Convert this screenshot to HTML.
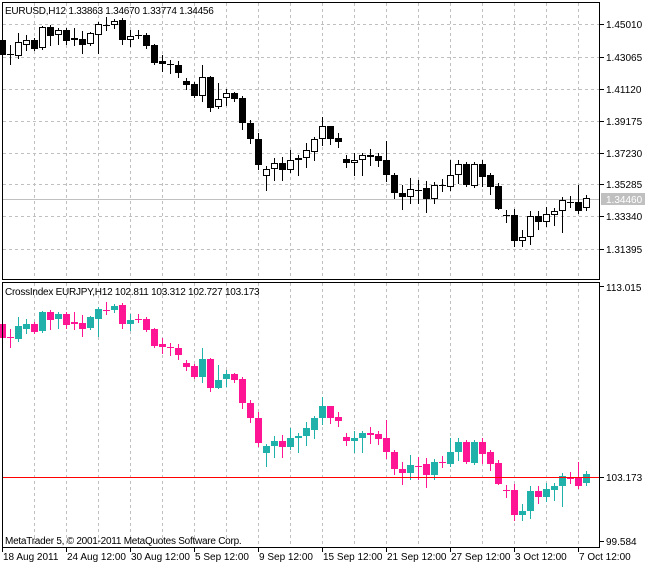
<!DOCTYPE html>
<html><head><meta charset="utf-8"><style>
html,body{margin:0;padding:0;background:#fff;width:653px;height:569px;overflow:hidden}
svg{display:block}
text{font-family:"Liberation Sans",sans-serif;font-size:10px;fill:#000}
.h{letter-spacing:-0.25px}
</style></head><body>
<svg id="s" width="653" height="569" xmlns="http://www.w3.org/2000/svg">
<rect x="0" y="0" width="653" height="569" fill="#fff"/>
<g id="grid"></g>
<line x1="2" y1="199.5" x2="600" y2="199.5" stroke="#c0c0c0"/>
<g id="c"></g>
<line x1="2" y1="477.5" x2="600" y2="477.5" stroke="#ff0000"/>
<rect x="2.5" y="2.5" width="597" height="277" fill="none" stroke="#000"/>
<rect x="2.5" y="282.5" width="597" height="265" fill="none" stroke="#000"/>
<text class="h" x="5" y="14">EURUSD,H12  1.33863 1.34670 1.33774 1.34456</text>
<text class="h" x="5" y="295">CrossIndex EURJPY,H12 102.811 103.312 102.727 103.173</text>
<text class="h" x="5" y="544">MetaTrader 5, © 2001-2011 MetaQuotes Software Corp.</text>
<g id="ax"></g>
<rect x="601" y="193" width="44" height="12" fill="#c0c0c0"/>
<text x="606" y="203" style="fill:#fff">1.34460</text>
<text x="606" y="291">113.015</text>
<text x="606" y="481">103.173</text>
<line x1="600" y1="477.5" x2="604" y2="477.5" stroke="#000"/>
<text x="606" y="545">99.584</text>
<line x1="600" y1="541.5" x2="604" y2="541.5" stroke="#000"/>
<line x1="600" y1="286.5" x2="604" y2="286.5" stroke="#000"/>
</svg>
<script>
var NS="http://www.w3.org/2000/svg";
function el(p,t,a){var e=document.createElementNS(NS,t);for(var k in a)e.setAttribute(k,a[k]);p.appendChild(e);return e;}
var g=document.getElementById('grid'),c=document.getElementById('c'),ax=document.getElementById('ax');
var d="#c0c0c0";
for(var x=34;x<600;x+=32){
 el(g,'line',{x1:x+.5,y1:3,x2:x+.5,y2:280,stroke:d,'stroke-dasharray':'3,3'});
 el(g,'line',{x1:x+.5,y1:283,x2:x+.5,y2:548,stroke:d,'stroke-dasharray':'3,3'});
}
var hy=[24,57,89,121,153,184,216,249],hl=["1.45010","1.43065","1.41120","1.39175","1.37230","1.35285","1.33340","1.31395"];
for(var i=0;i<hy.length;i++){
 el(g,'line',{x1:3,y1:hy[i]+.5,x2:600,y2:hy[i]+.5,stroke:d,'stroke-dasharray':'3,3'});
 el(ax,'line',{x1:600,y1:hy[i]+.5,x2:604,y2:hy[i]+.5,stroke:'#000'});
 var t=el(ax,'text',{x:606,y:hy[i]+4});t.textContent=hl[i];
}
var xl=["18 Aug 2011","24 Aug 12:00","30 Aug 12:00","5 Sep 12:00","9 Sep 12:00","15 Sep 12:00","21 Sep 12:00","27 Sep 12:00","3 Oct 12:00","7 Oct 12:00"];
for(var i=0;i<xl.length;i++){
 var xx=2+64*i;
 el(ax,'line',{x1:xx+.5,y1:548,x2:xx+.5,y2:552,stroke:'#000'});
 var t=el(ax,'text',{x:xx+1,y:560});t.textContent=xl[i];
}
var C=[
['b',40,55,38,58],['d',54,54,45,64],['w',42,56,33,58],['w',40,45,35,50],['b',40,49,38,50],['w',27,48,26,49],
['b',27,36,25,45],['w',30,35,28,44],['b',30,41,28,44],['b',38,40,28,45],['b',39,45,31,53],['w',33,44,32,45],
['w',24,35,22,53],['d',25,25,17,30],['w',21,25,19,28],['b',20,40,18,44],['w',36,40,30,46],['d',35,35,30,38],
['b',35,46,33,48],['b',45,63,44,64],['b',61,64,55,71],['d',64,64,60,73],['b',65,73,61,77],['b',81,85,78,89],
['b',84,96,82,97],['w',77,96,65,101],['b',77,108,76,111],['w',99,107,83,108],['w',93,98,89,105],['b',93,99,92,101],
['b',98,123,96,129],['b',123,139,120,143],['b',139,165,133,169],['w',169,176,166,190],['w',163,169,158,180],['b',163,170,157,180],
['w',160,170,150,172],['w',158,160,155,175],['w',150,158,143,167],['w',139,152,137,160],['w',126,139,117,145],['b',126,139,126,144],
['b',138,142,133,147],['b',159,163,155,167],['w',160,163,153,175],['w',155,160,153,175],['b',155,157,149,165],['b',156,161,153,166],
['b',160,175,141,181],['b',175,193,173,198],['b',193,197,185,209],['w',189,197,178,203],['d',190,190,180,203],['b',188,199,181,212],
['w',185,199,182,203],['d',185,185,179,191],['w',175,187,160,190],['w',164,175,160,183],['b',164,185,162,186],['w',164,186,162,187],
['b',164,177,160,186],['b',175,187,173,194],['b',186,209,183,209],['d',215,215,210,222],['b',215,241,209,246],['w',237,241,230,246],
['w',216,237,211,244],['b',216,222,211,229],['w',214,222,207,226],['w',211,215,208,225],['w',200,211,197,232],['d',202,202,196,207],
['b',202,211,185,213],['w',198,208,195,210]
];
function draw(cx,t,bt,bb,wt,wb,col,bot){
 el(c,'line',{x1:cx+.5,y1:wt,x2:cx+.5,y2:wb+1,stroke:col});
 if(t=='d'){el(c,'line',{x1:cx-3,y1:bt+.5,x2:cx+4,y2:bt+.5,stroke:col});return;}
 if(bot) el(c,'rect',{x:cx-3,y:bt,width:7,height:Math.max(bb-bt,2),fill:col});
 else if(t=='b') el(c,'rect',{x:cx-3,y:bt,width:7,height:Math.max(bb-bt,2),fill:'#000'});
 else el(c,'rect',{x:cx-2.5,y:bt+.5,width:6,height:Math.max(bb-bt-1,1),fill:'#fff',stroke:'#000'});
}
function m(y){return Math.round(302+(y-17)*0.95);}
for(var i=0;i<C.length;i++){
 var k=C[i],cx=2+8*i;
 draw(cx,k[0],Math.max(k[1],3),k[2],Math.max(k[3],3),k[4],'#000',false);
 var col=k[0]=='w'?'#20b2aa':'#ff1493';
 draw(cx,k[0],Math.max(m(k[1]),284),m(k[2]),Math.max(m(k[3]),284),m(k[4]),col,true);
}
</script>
</body></html>
